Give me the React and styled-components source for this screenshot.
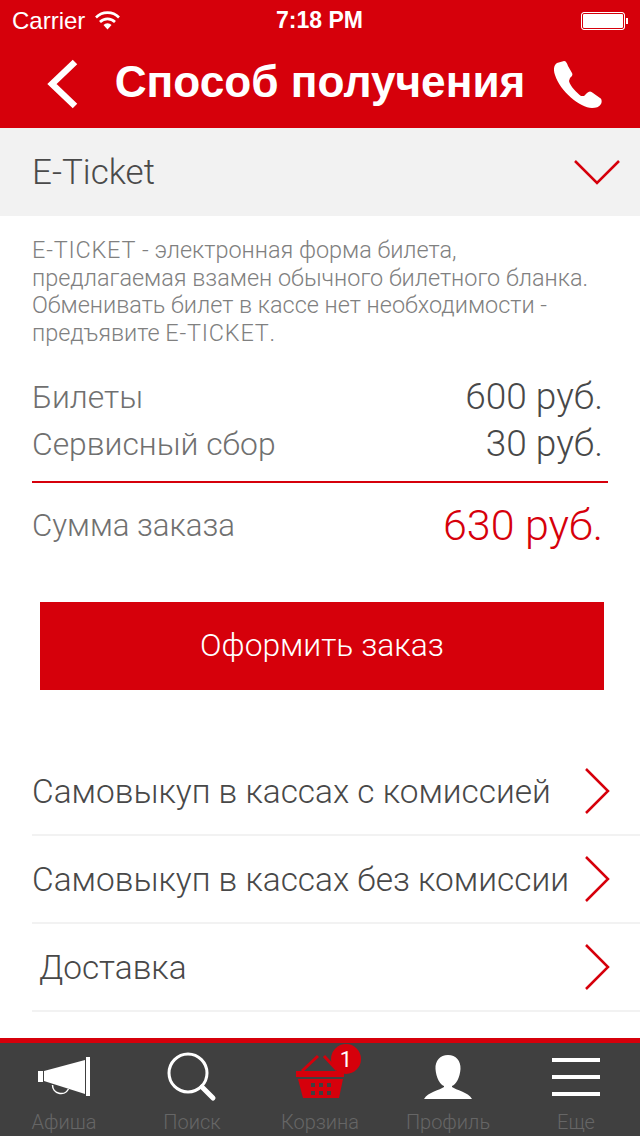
import styled, { createGlobalStyle } from "styled-components";

const Global = createGlobalStyle`
  html, body { margin: 0; padding: 0; background: #fff; }
  body { font-family: Roboto, "Liberation Sans", Arial, sans-serif; font-weight: 300; }
`;

const Screen = styled.div`
  width: 640px;
  height: 1136px;
  display: flex;
  flex-direction: column;
  overflow: hidden;
  background: #fff;
`;

const Header = styled.header`
  height: 128px;
  flex: none;
  background: #d6000b;
  color: #fff;
  display: flex;
  flex-direction: column;
`;

const StatusBar = styled.div`
  height: 40px;
  display: grid;
  grid-template-columns: 1fr auto 1fr;
  align-items: center;
  padding: 1px 15px 0 12px;
  font-family: "Liberation Sans", Arial, sans-serif;
  font-weight: 400;
  font-size: 24px;
`;

const Carrier = styled.div`
  display: flex;
  align-items: center;
  gap: 10px;
`;

const Time = styled.div`
  font-weight: 700;
  font-size: 23px;
  padding-left: 2px;
`;

const Battery = styled.div`
  justify-self: end;
  box-sizing: border-box;
  width: 44px;
  height: 18px;
  background: #fff;
  border: 1px solid #fff;
  outline: 1px solid #d6000b;
  outline-offset: -2px;
  border-radius: 3px;
  position: relative;
  &::after {
    content: "";
    position: absolute;
    right: -4px;
    top: 5px;
    width: 2px;
    height: 6px;
    background: #fff;
  }
`;

const NavBar = styled.div`
  height: 88px;
  display: flex;
  align-items: center;
  padding: 0 38px 0 47px;
`;

const Title = styled.h1`
  flex: 1;
  margin: 0 0 5px;
  text-align: center;
  font-family: "Liberation Sans", Arial, sans-serif;
  font-size: 44.2px;
  font-weight: 700;
  white-space: nowrap;
  padding-left: 7px;
`;

const Accordion = styled.div`
  height: 88px;
  flex: none;
  background: #f2f2f2;
  display: flex;
  align-items: center;
  justify-content: space-between;
  padding: 0 20px 0 32px;
  font-size: 35px;
  color: #4a4a4a;
`;

const Body = styled.section`
  padding: 21px 32px 0;
  flex: 1;
`;

const Description = styled.p`
  margin: 0 0 26px;
  font-size: 23.45px;
  line-height: 27.5px;
  color: #808080;
  white-space: nowrap;
`;

const Latin = styled.span`
  letter-spacing: 0.8px;
`;

const PriceRow = styled.div`
  display: flex;
  justify-content: space-between;
  align-items: center;
  height: 47px;
  padding-right: 5px;
  color: #707070;
  font-size: 31.8px;
`;

const Amount = styled.span`
  color: ${(p) => p.$color || "#484848"};
  font-size: ${(p) => p.$size || 37}px;
`;

const Divider = styled.div`
  height: 2px;
  background: #d6000b;
  margin: 14px 0 0;
`;

const TotalRow = styled(PriceRow)`
  height: 84px;
  font-size: 31.2px;
`;

const OrderButton = styled.button`
  display: block;
  width: 564px;
  height: 88px;
  margin: 35px 0 58px 8px;
  padding: 0 0 3px;
  border: 0;
  background: #d6000b;
  color: #fff;
  font: inherit;
  font-size: 31.8px;
`;

const OptionList = styled.div`
  margin-right: -32px;
`;

const Option = styled.div`
  height: 88px;
  box-sizing: border-box;
  border-bottom: 2px solid #f2f2f2;
  display: flex;
  align-items: center;
  justify-content: space-between;
  padding: 0 30px 0 ${(p) => p.$indent || 0}px;
  font-size: 33.4px;
  color: #484848;
  white-space: nowrap;
  svg {
    flex: none;
  }
`;

const TabBar = styled.nav`
  height: 98px;
  flex: none;
  box-sizing: border-box;
  border-top: 5px solid #d6000b;
  background: #404040;
  display: grid;
  grid-template-columns: repeat(5, 1fr);
`;

const Tab = styled.div`
  position: relative;
  display: flex;
  flex-direction: column;
  align-items: center;
  color: #666;
  font-size: 20px;
  height: 93px;
  overflow: hidden;
`;

const TabIcon = styled.div`
  height: 67px;
  display: flex;
  align-items: center;
  justify-content: center;
`;

const Badge = styled.span`
  position: absolute;
  top: 1px;
  left: 75px;
  width: 30px;
  height: 30px;
  border-radius: 50%;
  background: #d6000b;
  color: #fff;
  font-size: 22px;
  font-weight: 400;
  display: flex;
  align-items: center;
  justify-content: center;
`;

const WifiIcon = () => (
  <svg width="25" height="19" viewBox="0 0 25 19" fill="none" stroke="#fff" strokeWidth="2.600">
    <path d="M1 6.500a16 16 0 0 1 23 0" />
    <path d="M5 11a10.500 10.500 0 0 1 15 0" />
    <path d="M12.500 18.500l-4-4.500a5.500 5.500 0 0 1 8 0z" fill="#fff" stroke="none" />
  </svg>
);

const BackIcon = () => (
  <svg width="32" height="50" viewBox="0 0 32 50" fill="none" stroke="#fff" strokeWidth="6.500">
    <path d="M28 3L5 25l23 22" />
  </svg>
);

const PhoneIcon = () => (
  <svg width="48" height="47" viewBox="0 0 48 47" fill="#fff">
    <path d="M3 2L10 0C12 0 13 2 14 5L18 12C19 14 18 15 16 17L15 20C16 25 23 32 27 35L30 35L33 32C35 30 37 30 39 32L46 37C48 38 48 41 47 43C45 46 42 47 38 47C26 47 6 30 1 14C-1 8 0 4 3 2Z" />
  </svg>
);

const ChevronDown = () => (
  <svg width="46" height="26" viewBox="0 0 46 26" fill="none" stroke="#d6000b" strokeWidth="2.500">
    <path d="M1 2l22 22L45 2" />
  </svg>
);

const ChevronRight = () => (
  <svg width="26" height="46" viewBox="0 0 26 46" fill="none" stroke="#d6000b" strokeWidth="2.500">
    <path d="M2 1l22 22L2 45" />
  </svg>
);

const HornIcon = () => (
  <svg width="52" height="39" viewBox="0 0 52 39" fill="#fff">
    <path d="M0 14h5v11H0z" />
    <path d="M6 14L47 3v34L6 24z" />
    <path d="M48 0h4v39h-4z" />
    <path d="M14.500 28a8.500 8.500 0 0 0 16 4" fill="none" stroke="#fff" strokeWidth="1.500" />
  </svg>
);

const SearchIcon = () => (
  <svg width="50" height="50" viewBox="0 0 50 50" fill="none" stroke="#fff">
    <circle cx="21" cy="21" r="19" strokeWidth="3" />
    <path d="M35 35l11 11" strokeWidth="5" strokeLinecap="round" />
  </svg>
);

const BasketIcon = () => (
  <svg width="50" height="46" viewBox="0 0 50 46" fill="#d6000b">
    <path d="M1 17h48v6H1z" />
    <path d="M7 17L23 2M29 2l13 14" fill="none" stroke="#d6000b" strokeWidth="3" />
    <path
      fillRule="evenodd"
      d="M3 25h45l-4 19H8zM16 29v4h4v-4zm8 0v4h4v-4zm8 0v4h4v-4zM16 37v4h4v-4zm8 0v4h4v-4zm8 0v4h4v-4z"
    />
  </svg>
);

const ProfileIcon = () => (
  <svg width="48" height="44" viewBox="0 0 48 44" fill="#fff">
    <path d="M24 0C32 0 37 6 36.500 14C36 22 32 30 28 31L28 32C32 35 44 37 48 44H0C4 37 16 35 20 32L20 31C16 30 12 22 11.500 14C11 6 16 0 24 0Z" />
  </svg>
);

const MenuIcon = () => (
  <svg width="48" height="38" viewBox="0 0 48 38" fill="#fff">
    <rect y="0" width="48" height="4" />
    <rect y="17" width="48" height="4" />
    <rect y="34" width="48" height="4" />
  </svg>
);

const tabs = [
  { label: "Афиша", icon: <HornIcon /> },
  { label: "Поиск", icon: <SearchIcon /> },
  { label: "Корзина", icon: <BasketIcon />, badge: 1 },
  { label: "Профиль", icon: <ProfileIcon /> },
  { label: "Еще", icon: <MenuIcon /> },
];

const options = [
  { label: "Самовыкуп в кассах с комиссией" },
  { label: "Самовыкуп в кассах без комиссии" },
  { label: "Доставка", indent: 7 },
];

export default function App() {
  return (
    <Screen>
      <Global />
      <Header>
        <StatusBar>
          <Carrier>
            Carrier <WifiIcon />
          </Carrier>
          <Time>7:18 PM</Time>
          <Battery />
        </StatusBar>
        <NavBar>
          <BackIcon />
          <Title>Способ получения</Title>
          <PhoneIcon />
        </NavBar>
      </Header>
      <Accordion>
        E-Ticket
        <ChevronDown />
      </Accordion>
      <Body>
        <Description>
          <Latin>E-TICKET</Latin> - электронная форма билета,
          <br />
          предлагаемая взамен обычного билетного бланка.
          <br />
          Обменивать билет в кассе нет необходимости -
          <br />
          предъявите <Latin>E-TICKET</Latin>.
        </Description>
        <PriceRow>
          Билеты <Amount>600 руб.</Amount>
        </PriceRow>
        <PriceRow>
          Сервисный сбор <Amount>30 руб.</Amount>
        </PriceRow>
        <Divider />
        <TotalRow>
          Сумма заказа <Amount $color="#d6000b" $size={43}>630 руб.</Amount>
        </TotalRow>
        <OrderButton>Оформить заказ</OrderButton>
        <OptionList>
          {options.map((o) => (
            <Option key={o.label} $indent={o.indent}>
              {o.label}
              <ChevronRight />
            </Option>
          ))}
        </OptionList>
      </Body>
      <TabBar>
        {tabs.map((t) => (
          <Tab key={t.label}>
            <TabIcon>{t.icon}</TabIcon>
            {t.label}
            {t.badge && <Badge>{t.badge}</Badge>}
          </Tab>
        ))}
      </TabBar>
    </Screen>
  );
}
